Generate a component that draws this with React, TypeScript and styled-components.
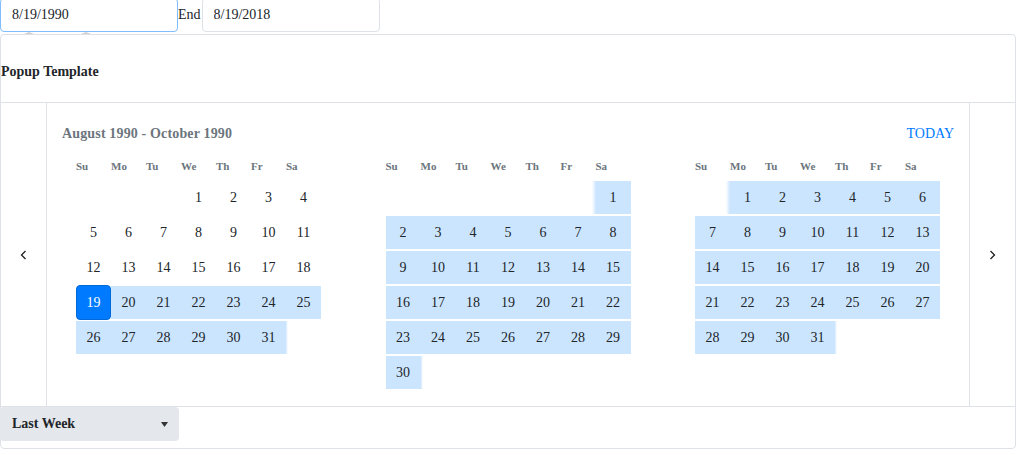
import React from 'react';
import styled, { createGlobalStyle, css } from 'styled-components';

const GlobalStyle = createGlobalStyle`
  html, body { margin: 0; padding: 0; background: #fff; }
  body {
    font-family: "Liberation Serif", "Times New Roman", serif;
    font-size: 14px;
    color: #212529;
    overflow: hidden;
  }
  * { box-sizing: border-box; }
`;

const Page = styled.div`
  width: 1018px;
`;

const TopBar = styled.div`
  display: flex;
  align-items: center;
  height: 34px;
  margin-top: -2px;
`;

const InputWrap = styled.div`
  position: relative;
  display: flex;
`;

const DateInput = styled.input<{ $focused?: boolean }>`
  width: 178px;
  height: 34px;
  padding: 0 11px;
  font: inherit;
  font-size: 14px;
  color: #212529;
  background: #fff;
  border: 1px solid ${(p) => (p.$focused ? '#80bdff' : '#dee2e6')};
  border-radius: 4px;
  outline: none;
`;

const Caret = styled.span<{ $left: number }>`
  position: absolute;
  top: 34px;
  left: ${(p) => p.$left}px;
  width: 0;
  height: 0;
  border-left: 5px solid transparent;
  border-right: 5px solid transparent;
  border-bottom: 2px solid #d0d0d0;
`;

const EndLabel = styled.span`
  font-size: 14px;
  line-height: 20px;
  margin-right: 1px;
`;

const Panel = styled.section`
  margin-top: 2px;
  width: 1016px;
  border: 1px solid #dee2e6;
  border-radius: 4px;
  background: #fff;
`;

const PanelHeader = styled.div`
  padding: 27px 0 20px 0;
  font-weight: bold;
  font-size: 14px;
  line-height: 20px;
`;

const Calendar = styled.div`
  display: flex;
  border-top: 1px solid #dee2e6;
  border-bottom: 1px solid #dee2e6;
`;

const NavCol = styled.div<{ $side: 'left' | 'right' }>`
  width: 46px;
  flex: none;
  display: flex;
  align-items: center;
  justify-content: center;
  ${(p) =>
    p.$side === 'left'
      ? css`border-right: 1px solid #dee2e6;`
      : css`border-left: 1px solid #dee2e6;`}
`;

const CalBody = styled.div`
  flex: 1;
  padding: 0 15px 16px;
`;

const TitleRow = styled.div`
  height: 41px;
  display: flex;
  align-items: flex-end;
  justify-content: space-between;
  line-height: 20px;
`;

const RangeTitle = styled.div`
  font-weight: bold;
  font-size: 14px;
  color: #6c757d;
  letter-spacing: 0.15px;
`;

const TodayLink = styled.span`
  font-size: 14px;
  color: #007bff;
`;

const Months = styled.div`
  display: flex;
  gap: 64.5px;
  margin-left: 14px;
`;

const Month = styled.div`
  width: 245px;
`;

const WeekdayRow = styled.div`
  display: grid;
  grid-template-columns: repeat(7, 35px);
  margin-top: 12px;
  margin-bottom: 4px;
  height: 20px;
  line-height: 20px;
  font-weight: bold;
  font-size: 11px;
  color: #6c757d;
`;

const DaysGrid = styled.div`
  display: grid;
  grid-template-columns: repeat(7, 35px);
  grid-auto-rows: 35px;
`;

const Cell = styled.div`
  padding: 1px 0;
  display: flex;
`;

const Day = styled.div<{
  $inRange?: boolean;
  $selected?: boolean;
  $edge?: 'start' | 'end';
}>`
  flex: 1;
  display: flex;
  align-items: center;
  justify-content: center;
  font-size: 14px;
  color: #212529;
  ${(p) =>
    p.$inRange &&
    css`
      background: #cce5ff;
    `}
  ${(p) =>
    p.$edge === 'start' &&
    css`
      margin-left: -4px;
      padding-left: 4px;
      background: linear-gradient(to right, rgba(204, 229, 255, 0) 0, #cce5ff 4px);
    `}
  ${(p) =>
    p.$edge === 'end' &&
    css`
      margin-right: -2px;
      padding-right: 2px;
      background: linear-gradient(to left, rgba(204, 229, 255, 0) 0, #cce5ff 2.5px);
    `}
  ${(p) =>
    p.$selected &&
    css`
      margin: -1px 0;
      background: #007bff;
      border: 1px solid #0069d9;
      border-radius: 4px;
      color: #fff;
    `}
`;

const Footer = styled.div`
  padding-bottom: 7px;
`;

const Dropdown = styled.div`
  width: 179px;
  height: 34px;
  margin-left: -1px;
  padding: 0 11px 0 12px;
  display: flex;
  align-items: center;
  justify-content: space-between;
  background: #e4e7eb;
  border-radius: 4px;
  font-weight: bold;
  font-size: 14px;
  color: #212529;
`;

const WEEKDAYS = ['Su', 'Mo', 'Tu', 'We', 'Th', 'Fr', 'Sa'];

type MonthData = {
  offset: number;
  days: number;
  rangeFrom: number;
  selected?: number;
};

const MONTHS: MonthData[] = [
  { offset: 3, days: 31, rangeFrom: 19, selected: 19 },
  { offset: 6, days: 30, rangeFrom: 1 },
  { offset: 1, days: 31, rangeFrom: 1 },
];

const Chevron = ({ dir }: { dir: 'left' | 'right' }) => (
  <svg width="7" height="10" viewBox="0 0 7 10">
    <path
      d={dir === 'left' ? 'M5.5 1 L1.5 5 L5.5 9' : 'M1.5 1 L5.5 5 L1.5 9'}
      fill="none"
      stroke="#222"
      strokeWidth="1.3"
    />
  </svg>
);

const MonthView = ({ m }: { m: MonthData }) => {
  const cells: React.ReactNode[] = [];
  for (let i = 0; i < m.offset; i++) cells.push(<Cell key={`e${i}`} />);
  for (let d = 1; d <= m.days; d++) {
    const inRange = d >= m.rangeFrom;
    const selected = m.selected === d;
    let edge: 'start' | 'end' | undefined;
    if (!selected && inRange && d === m.rangeFrom) edge = 'start';
    if (inRange && d === m.days) edge = 'end';
    cells.push(
      <Cell key={d}>
        <Day $inRange={inRange} $selected={selected} $edge={edge}>
          {d}
        </Day>
      </Cell>
    );
  }
  return (
    <Month>
      <WeekdayRow>
        {WEEKDAYS.map((w) => (
          <span key={w}>{w}</span>
        ))}
      </WeekdayRow>
      <DaysGrid>{cells}</DaysGrid>
    </Month>
  );
};

export default function App() {
  return (
    <Page>
      <GlobalStyle />
      <TopBar>
        <InputWrap>
          <DateInput $focused defaultValue="8/19/1990" />
          <Caret $left={24} />
          <Caret $left={81} />
        </InputWrap>
        <EndLabel>End</EndLabel>
        <DateInput defaultValue="8/19/2018" />
      </TopBar>
      <Panel>
        <PanelHeader>Popup Template</PanelHeader>
        <Calendar>
          <NavCol $side="left">
            <Chevron dir="left" />
          </NavCol>
          <CalBody>
            <TitleRow>
              <RangeTitle>August 1990 - October 1990</RangeTitle>
              <TodayLink>TODAY</TodayLink>
            </TitleRow>
            <Months>
              {MONTHS.map((m, i) => (
                <MonthView key={i} m={m} />
              ))}
            </Months>
          </CalBody>
          <NavCol $side="right">
            <Chevron dir="right" />
          </NavCol>
        </Calendar>
        <Footer>
          <Dropdown>
            <span>Last Week</span>
            <svg width="7" height="5" viewBox="0 0 7 5">
              <path d="M0 0 H7 L3.5 5 Z" fill="#333" />
            </svg>
          </Dropdown>
        </Footer>
      </Panel>
    </Page>
  );
}
